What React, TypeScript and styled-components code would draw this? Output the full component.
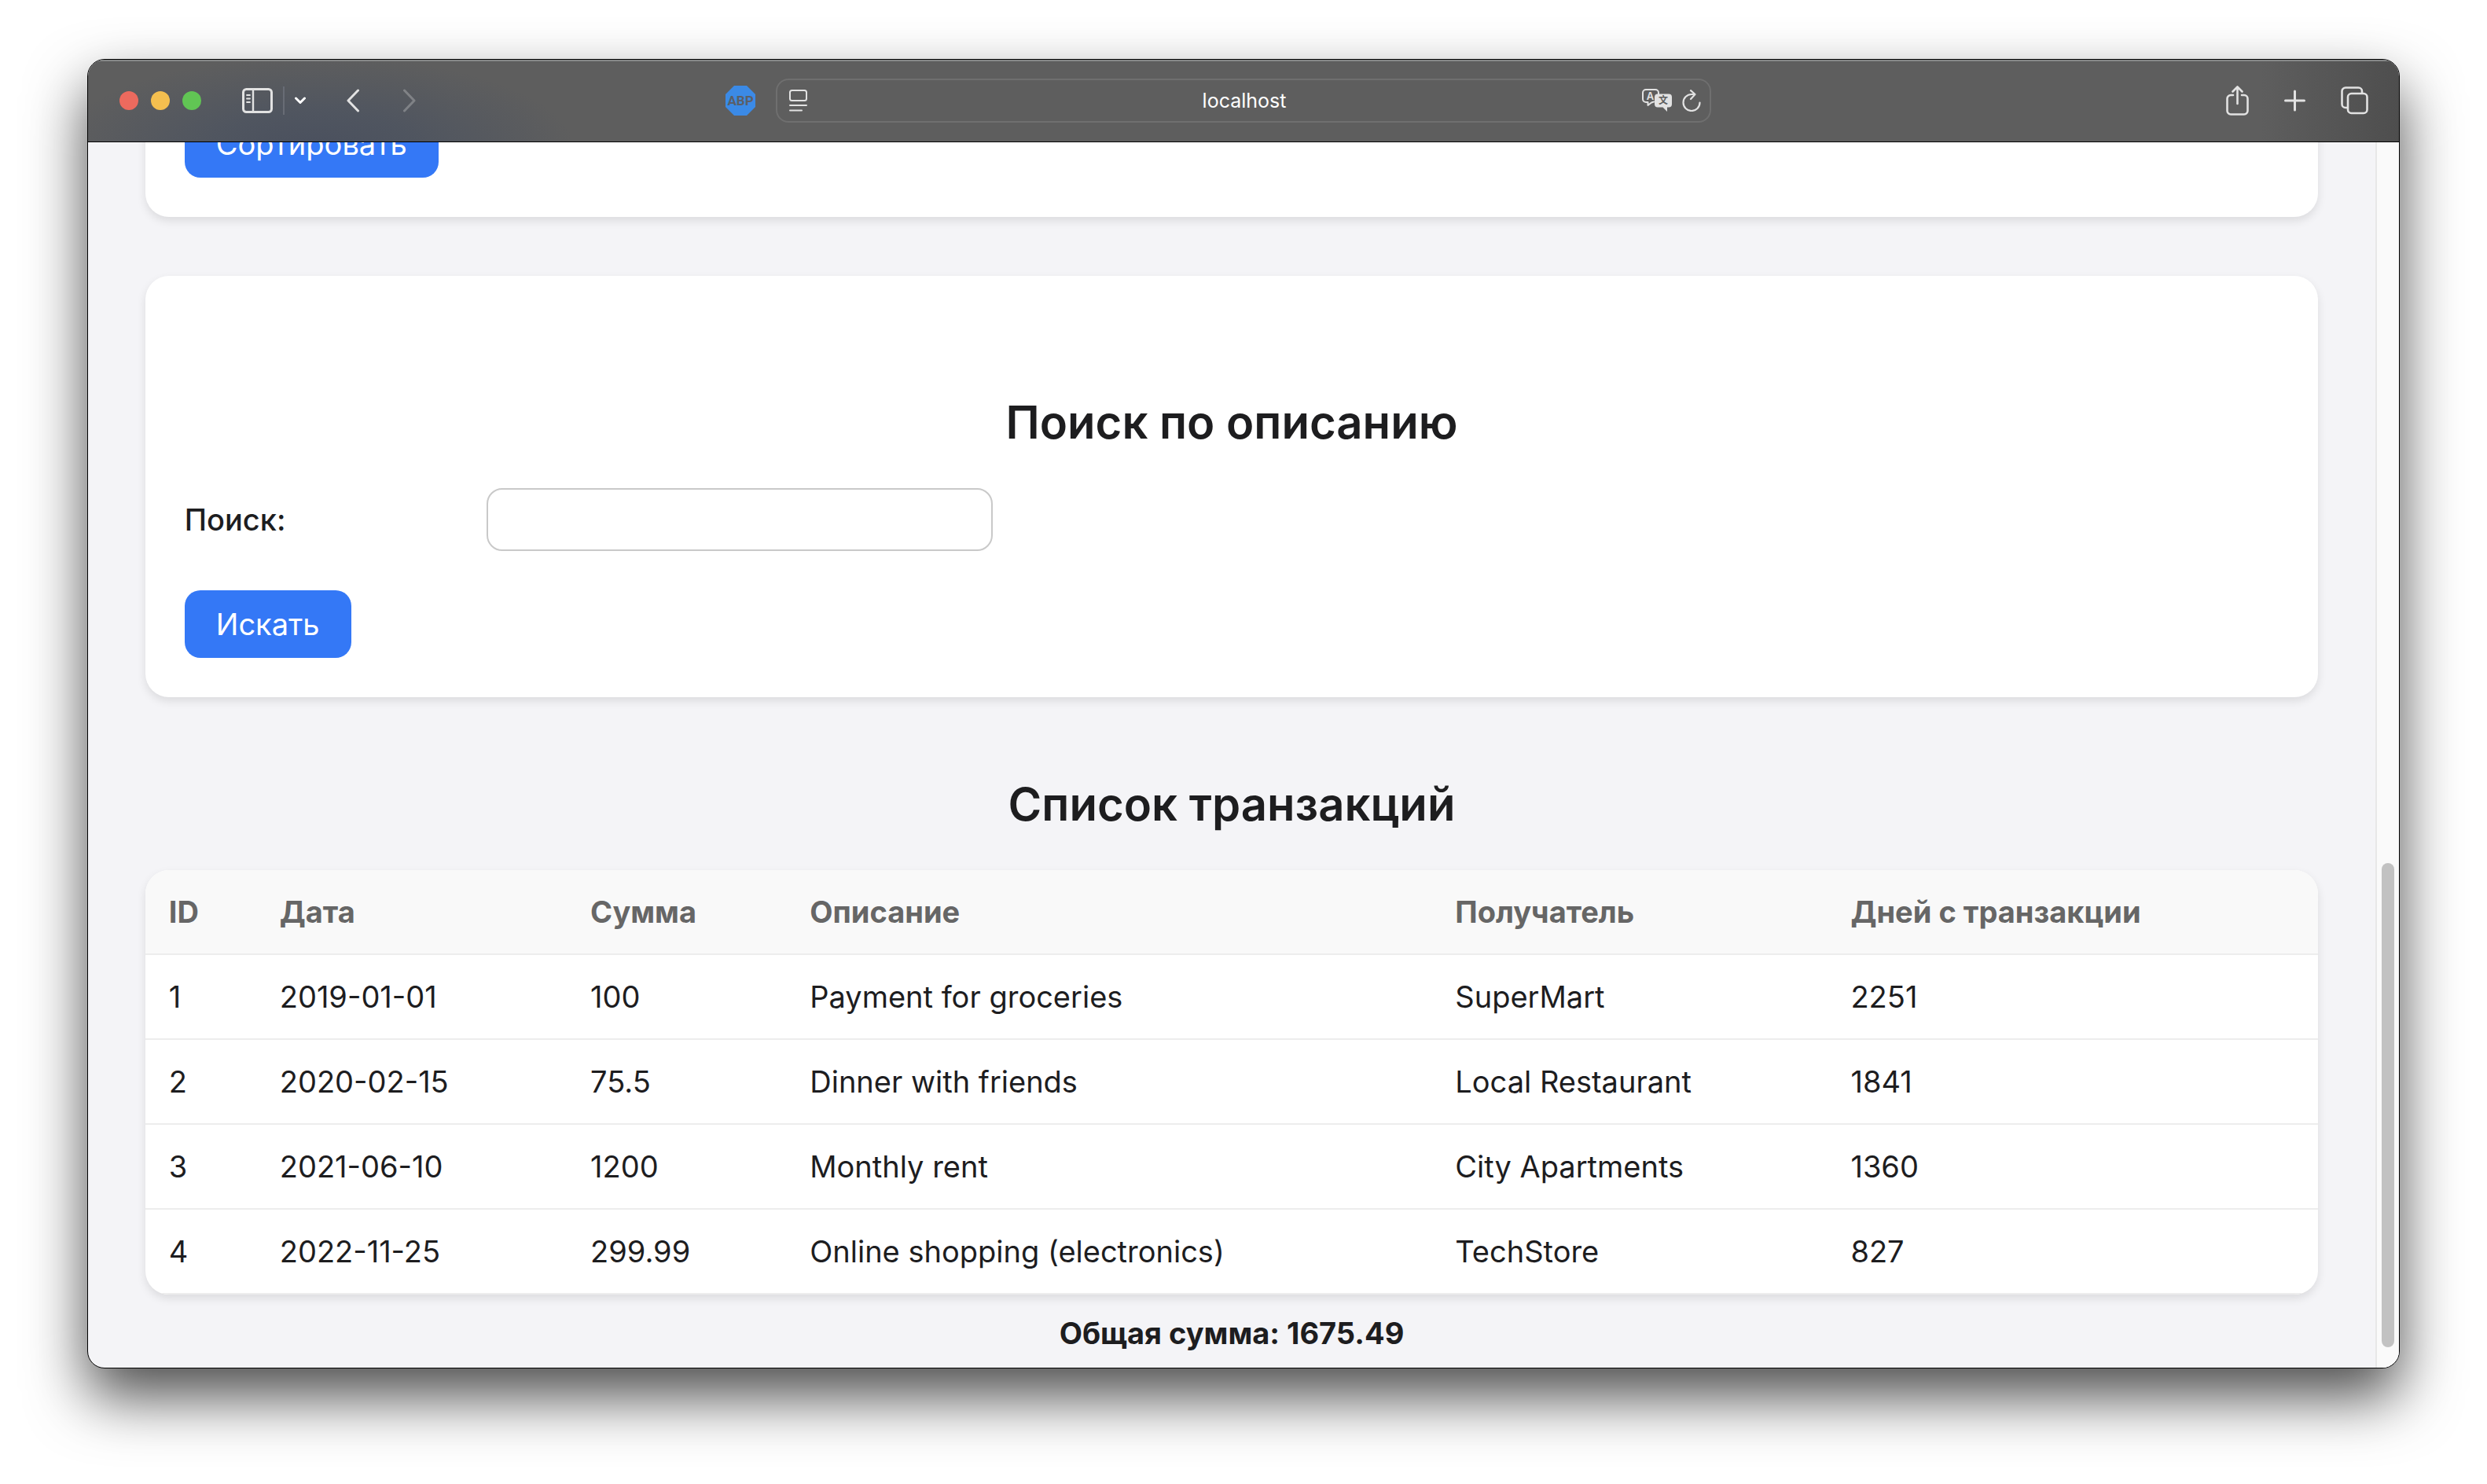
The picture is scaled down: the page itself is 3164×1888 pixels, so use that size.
import React from "react";
import styled, { createGlobalStyle } from "styled-components";

const GlobalStyle = createGlobalStyle`
  *, *::before, *::after { box-sizing: border-box; }
  body {
    margin: 0;
    background: #fff;
    color: #1d1d1f;
    font-family: Inter, Roboto, sans-serif;
    font-size: 38px;
    line-height: 48px;
  }
  button, input { font: inherit; }
`;

const Desktop = styled.div`
  display: flex;
  height: 100vh;
  padding: 75px 111px 147px;
`;

const BrowserWindow = styled.div`
  display: flex;
  flex-direction: column;
  flex: 1;
  min-width: 0;
  overflow: hidden;
  border: 1px solid #000;
  border-radius: 22px;
  background: #f4f4f7;
  box-shadow: 0 36px 76px rgba(0, 0, 0, 0.7);
`;

const Toolbar = styled.header`
  display: grid;
  grid-template-columns: minmax(0, 1fr) 40.5% minmax(0, 1fr);
  flex: none;
  align-items: center;
  height: 105px;
  border-bottom: 1px solid #000;
  color: #e2e2e2;
  background:
    radial-gradient(ellipse 330px 120px at 290px 115px, #4a505e 0%, rgba(76, 83, 96, 0.8) 40%, rgba(94, 94, 94, 0) 100%),
    linear-gradient(90deg, #5e5e5e 94%, #4e4e4e 100%);
  box-shadow: inset 0 2px 0 #858787;
`;

const ToolbarSide = styled.div<{ $end?: boolean }>`
  display: flex;
  align-items: center;
  justify-content: ${(p) => (p.$end ? "flex-end" : "flex-start")};
  gap: ${(p) => (p.$end ? 45 : 52)}px;
  padding: ${(p) => (p.$end ? "0 39px 0 0" : "0 26px 0 40px")};
`;

const ToolGroup = styled.div<{ $gap: number }>`
  display: flex;
  align-items: center;
  gap: ${(p) => p.$gap}px;
`;

const Light = styled.button<{ $color: string }>`
  width: 24px;
  height: 24px;
  padding: 0;
  border: 0;
  border-radius: 50%;
  background: ${(p) => p.$color};
`;

const IconButton = styled.button<{ $dim?: boolean; $last?: boolean }>`
  display: flex;
  padding: 0;
  border: 0;
  background: none;
  color: inherit;
  opacity: ${(p) => (p.$dim ? 0.3 : 1)};
  margin-left: ${(p) => (p.$last ? "auto" : "0")};
  svg { display: block; fill: none; stroke: currentColor; stroke-linecap: round; stroke-linejoin: round; }
`;

const Divider = styled.span`
  width: 2px;
  height: 36px;
  background: #686c75;
`;

const AddressBar = styled.div`
  display: flex;
  align-items: center;
  gap: 13px;
  height: 56px;
  padding: 0 11px 0 15px;
  border: 2px solid #6f6f6f;
  border-radius: 16px;
`;

const AddressInput = styled.input`
  flex: 1;
  min-width: 0;
  padding: 0 0 0 50px;
  border: 0;
  outline: 0;
  background: none;
  color: #fff;
  font-size: 25px;
  line-height: 32px;
  text-align: center;
`;

const Viewport = styled.div`
  display: flex;
  flex: 1;
  min-height: 0;
`;

/* The page rests at the end of its scroll, so what overflows is cut at the top. */
const Page = styled.main`
  display: flex;
  flex: 1;
  flex-direction: column;
  align-items: center;
  justify-content: flex-end;
  overflow: hidden;
  padding-bottom: 20px;
  > * { flex: none; }
`;

const Card = styled.form`
  width: 95%;
  margin-bottom: 75px;
  padding: 50px;
  border-radius: 30px;
  background: #fff;
  box-shadow: 0 5px 12px rgba(0, 0, 0, 0.1);
  &:last-of-type { margin-bottom: 0; }
`;

const Heading = styled.h2`
  margin: 100px 0 48px;
  font-size: 58px;
  font-weight: 600;
  line-height: 72px;
  text-align: center;
`;

const Field = styled.div`
  display: grid;
  grid-template-columns: 384px 644px;
  align-items: center;
  margin-bottom: 50px;
`;

const FieldLabel = styled.label`
  font-weight: 500;
`;

const TextInput = styled.input`
  height: 80px;
  padding: 0 20px;
  border: 2px solid #c9c9c9;
  border-radius: 20px;
  outline: 0;
  background: #fff;
`;

const PrimaryButton = styled.button`
  display: block;
  height: 86px;
  padding: 0 40px;
  border: 0;
  border-radius: 20px;
  background: #3478f6;
  color: #fff;
`;

const Table = styled.table`
  width: 95%;
  table-layout: fixed;
  border-spacing: 0;
  overflow: hidden;
  border-radius: 30px;
  background: #fff;
  box-shadow: 0 5px 12px rgba(0, 0, 0, 0.1);
  th, td {
    height: 108px;
    padding: 0 30px;
    border-bottom: 2px solid #ededed;
    text-align: left;
    white-space: nowrap;
  }
  th { background: #f9f9f9; color: #666; font-weight: 700; }
`;

const Column = styled.col<{ $width: number }>`
  width: ${(p) => p.$width}%;
`;

const Total = styled.p`
  margin: 25px 0 0;
  font-weight: 700;
`;

const ScrollTrack = styled.div`
  display: flex;
  flex-direction: column;
  justify-content: flex-end;
  width: 30px;
  padding: 0 6px 26px;
  border-left: 2px solid #e8e8e8;
  background: #fafafa;
`;

const ScrollThumb = styled.div`
  height: 40.2%;
  border-radius: 8px;
  background: #c2c2c2;
`;

const columns = [
  { title: "ID", width: 5.1 },
  { title: "Дата", width: 14.3 },
  { title: "Сумма", width: 10.1 },
  { title: "Описание", width: 29.7 },
  { title: "Получатель", width: 18.2 },
  { title: "Дней с транзакции", width: 22.6 },
];

const transactions = [
  ["1", "2019-01-01", "100", "Payment for groceries", "SuperMart", "2251"],
  ["2", "2020-02-15", "75.5", "Dinner with friends", "Local Restaurant", "1841"],
  ["3", "2021-06-10", "1200", "Monthly rent", "City Apartments", "1360"],
  ["4", "2022-11-25", "299.99", "Online shopping (electronics)", "TechStore", "827"],
];

const SidebarIcon = () => (
  <svg width="39" height="32" viewBox="0 0 39 32" strokeWidth="3">
    <rect x="1.5" y="1.5" width="36" height="29" rx="4" />
    <path d="M14 2v28" strokeWidth="2.4" />
    <path d="M6 9h4M6 13.500h4M6 18h4" strokeWidth="1.800" />
  </svg>
);
const ChevronDownIcon = () => (
  <svg width="14" height="10" viewBox="0 0 14 10" strokeWidth="3">
    <path d="M1.500 2 7 7.500 12.500 2" stroke="#fff" />
  </svg>
);
const BackIcon = () => (
  <svg width="16" height="30" viewBox="0 0 16 30" strokeWidth="3"><path d="M14.500 2 2 15l12.500 13" /></svg>
);
const ForwardIcon = () => (
  <svg width="16" height="30" viewBox="0 0 16 30" strokeWidth="3"><path d="M1.500 2 14 15 1.500 28" /></svg>
);
const BlockerIcon = () => (
  <svg width="38" height="38" viewBox="0 0 38 38">
    <path d="M11 0h16l11 11v16L27 38H11L0 27V11z" fill="#3b8ae6" stroke="none" />
    <text x="19" y="25" textAnchor="middle" fontFamily="Roboto" fontSize="17" fontWeight="700" fill="#5a5f68" stroke="none">ABP</text>
  </svg>
);
const ReaderIcon = () => (
  <svg width="23" height="28" viewBox="0 0 23 28" strokeWidth="2">
    <rect x="1" y="1" width="21" height="13" rx="2.500" />
    <path d="M1 20h21M1 26.500h15" />
  </svg>
);
const TranslateIcon = () => (
  <svg width="38" height="30" viewBox="0 0 38 30" strokeWidth="2">
    <path d="M15 16.500 12 17.500 7.500 21v-4H5a4 4 0 0 1-4-4V5a4 4 0 0 1 4-4h12a4 4 0 0 1 4 4v2" />
    <text x="10.500" y="14" textAnchor="middle" fontFamily="Inter" fontSize="13" fontWeight="600" fill="currentColor" stroke="none">A</text>
    <path d="M20 6.500h14a4 4 0 0 1 4 4v9a4 4 0 0 1-4 4h-2V29l-5.500-5.500H20a4 4 0 0 1-4-4v-9a4 4 0 0 1 4-4z" fill="currentColor" stroke="none" />
    <text x="27" y="19" textAnchor="middle" fontFamily="Noto Sans CJK SC" fontSize="12" fontWeight="700" fill="#5e5e5e" stroke="none">文</text>
  </svg>
);
const ReloadIcon = () => (
  <svg width="24" height="28" viewBox="0 0 24 28" strokeWidth="2.200">
    <path d="M22.500 16.500A10.500 10.500 0 1 1 12 6h4.500M11 1.200 16.500 6 11 12" />
  </svg>
);
const ShareIcon = () => (
  <svg width="29" height="38" viewBox="0 0 29 38" strokeWidth="2.600">
    <path d="M9 12H6a4.500 4.500 0 0 0-4.500 4.500v15.500A4.500 4.500 0 0 0 6 36.500h17a4.500 4.500 0 0 0 4.500-4.500V16.500A4.500 4.500 0 0 0 23 12h-3M14.500 23V2M8.500 7.500l6-6 6 6" />
  </svg>
);
const PlusIcon = () => (
  <svg width="27" height="28" viewBox="0 0 27 28" strokeWidth="3"><path d="M13.500 2v24M1.500 14h24" /></svg>
);
const TabsIcon = () => (
  <svg width="35" height="36" viewBox="0 0 35 36" strokeWidth="2.600">
    <path d="M8 27H6a4.500 4.500 0 0 1-4.500-4.500V6A4.500 4.500 0 0 1 6 1.500h16.500A4.500 4.500 0 0 1 27 6v2" />
    <rect x="9" y="9" width="24.500" height="25" rx="4.500" />
  </svg>
);

export default function App() {
  return (
    <Desktop>
      <GlobalStyle />
      <BrowserWindow>
        <Toolbar>
          <ToolbarSide>
            <ToolGroup $gap={16}>
              <Light $color="#ec6a5e" aria-label="Close" />
              <Light $color="#f4bf4f" aria-label="Minimize" />
              <Light $color="#61c554" aria-label="Zoom" />
            </ToolGroup>
            <ToolGroup $gap={13}>
              <IconButton aria-label="Sidebar"><SidebarIcon /></IconButton>
              <Divider />
              <IconButton aria-label="Tab groups"><ChevronDownIcon /></IconButton>
            </ToolGroup>
            <ToolGroup $gap={56}>
              <IconButton aria-label="Back"><BackIcon /></IconButton>
              <IconButton $dim aria-label="Forward"><ForwardIcon /></IconButton>
            </ToolGroup>
            <IconButton $last aria-label="Adblock Plus"><BlockerIcon /></IconButton>
          </ToolbarSide>
          <AddressBar>
            <IconButton aria-label="Reader"><ReaderIcon /></IconButton>
            <AddressInput aria-label="Address" defaultValue="localhost" />
            <IconButton aria-label="Translate"><TranslateIcon /></IconButton>
            <IconButton aria-label="Reload"><ReloadIcon /></IconButton>
          </AddressBar>
          <ToolbarSide $end>
            <IconButton aria-label="Share"><ShareIcon /></IconButton>
            <IconButton aria-label="New tab"><PlusIcon /></IconButton>
            <IconButton aria-label="Tab overview"><TabsIcon /></IconButton>
          </ToolbarSide>
        </Toolbar>
        <Viewport>
          <Page>
            <Card>
              <PrimaryButton type="button">Сортировать</PrimaryButton>
            </Card>
            <Card>
              <Heading>Поиск по описанию</Heading>
              <Field>
                <FieldLabel htmlFor="search">Поиск:</FieldLabel>
                <TextInput id="search" type="text" />
              </Field>
              <PrimaryButton type="button">Искать</PrimaryButton>
            </Card>
            <Heading>Список транзакций</Heading>
            <Table>
              <colgroup>
                {columns.map((c) => <Column key={c.title} $width={c.width} />)}
              </colgroup>
              <thead>
                <tr>{columns.map((c) => <th key={c.title}>{c.title}</th>)}</tr>
              </thead>
              <tbody>
                {transactions.map((row) => (
                  <tr key={row[0]}>{row.map((cell, i) => <td key={i}>{cell}</td>)}</tr>
                ))}
              </tbody>
            </Table>
            <Total>Общая сумма: 1675.49</Total>
          </Page>
          <ScrollTrack><ScrollThumb /></ScrollTrack>
        </Viewport>
      </BrowserWindow>
    </Desktop>
  );
}
